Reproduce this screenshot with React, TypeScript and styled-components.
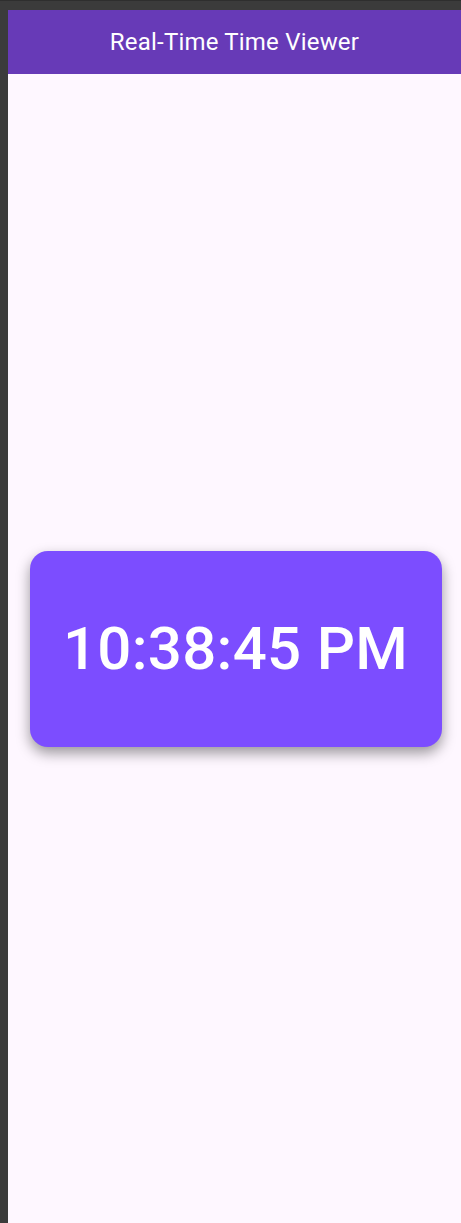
import styled, { createGlobalStyle } from 'styled-components';

const GlobalStyle = createGlobalStyle`
  html, body {
    margin: 0;
    padding: 0;
    height: 100%;
    background: #3b3b3b;
  }
  #root {
    height: 100%;
  }
`;

const Frame = styled.div`
  display: flex;
  flex-direction: column;
  height: 100%;
  box-sizing: border-box;
  padding: 9px 0 0 8px;
  background: #3b3b3b;
  border-top: 1px solid #2e2e2e;
`;

const Screen = styled.div`
  flex: 1;
  display: flex;
  flex-direction: column;
  background: #fef7ff;
  font-family: Roboto, 'Noto Sans', sans-serif;
`;

const AppBar = styled.header`
  height: 64px;
  flex-shrink: 0;
  display: flex;
  align-items: center;
  justify-content: center;
  background: #673ab7;
  color: #ffffff;
  font-size: 24px;
  letter-spacing: 0.2px;
`;

const Body = styled.main`
  flex: 1;
  display: flex;
  align-items: center;
  justify-content: center;
`;

const ClockCard = styled.div`
  width: 412px;
  height: 196px;
  box-sizing: border-box;
  margin-left: 2px;
  display: flex;
  align-items: center;
  justify-content: center;
  background: #7c4dff;
  border-radius: 18px;
  box-shadow: 0 6px 14px rgba(0, 0, 0, 0.4);
`;

const TimeText = styled.span`
  color: #ffffff;
  font-size: 60px;
  font-weight: 500;
  letter-spacing: 0.3px;
`;

const App = () => {
  return (
    <>
      <GlobalStyle />
      <Frame>
        <Screen>
          <AppBar>Real-Time Time Viewer</AppBar>
          <Body>
            <ClockCard>
              <TimeText>10:38:45 PM</TimeText>
            </ClockCard>
          </Body>
        </Screen>
      </Frame>
    </>
  );
};

export default App;
